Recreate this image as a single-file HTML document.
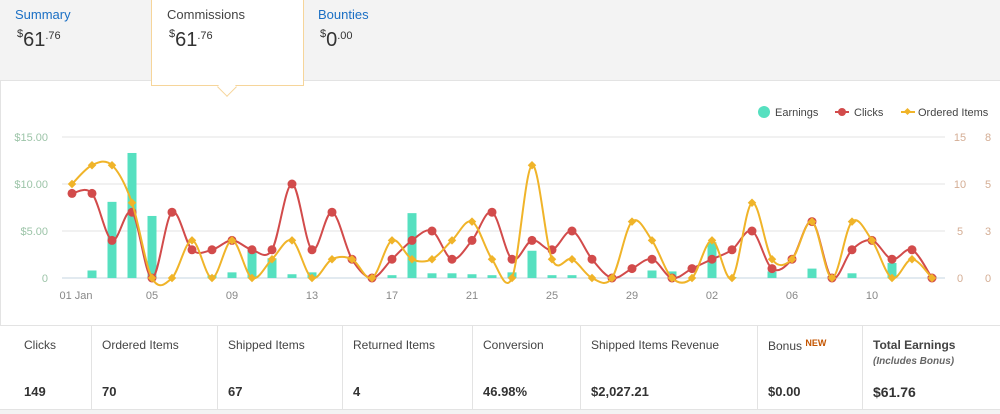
<!DOCTYPE html>
<html><head><meta charset="utf-8"><style>
*{margin:0;padding:0;box-sizing:border-box}
body{width:1000px;height:414px;background:#f3f3f3;font-family:"Liberation Sans",sans-serif;position:relative;overflow:hidden;color:#333}
.top{position:absolute;left:0;top:0;width:1000px;height:81px;background:#f3f3f3;border-bottom:1px solid #e3e3e3}
.main{position:absolute;left:0;top:81px;width:1000px;height:244px;background:#fff;border-left:1px solid #e3e3e3}
.tab{position:absolute;top:7px;font-size:13px}
.tab .l{color:#1a6fc4}
.amt{font-size:20px;color:#333;margin-top:6px;margin-left:2px}
.amt sup{font-size:11px;vertical-align:9px}
.amt .c{font-size:11px;vertical-align:7px}
.sel{position:absolute;left:151px;top:0;width:153px;height:86px;background:#fff;border:1px solid #f6d59a;border-top:none}
.arrow{position:absolute;left:220px;top:80px;width:14px;height:14px;background:#fff;border-right:1px solid #f6d59a;border-bottom:1px solid #f6d59a;transform:rotate(45deg)}
.stats{position:absolute;left:0;top:325px;width:1000px;height:85px;background:#fff;border-top:1px solid #e3e3e3;border-bottom:1px solid #e3e3e3}
.cell{position:absolute;top:0;height:84px;border-left:1px solid #e3e3e3;padding-left:10px}
.cell .h{position:absolute;top:12px;font-size:12px;color:#444;white-space:nowrap}
.cell .v{position:absolute;top:58px;font-size:13px;font-weight:bold;color:#333}
svg{position:absolute;left:0;top:0}
</style></head><body>
<div class="top"></div>
<div class="main"></div>
<div class="sel"></div><div class="arrow"></div>
<div class="tab" style="left:15px"><div class="l">Summary</div><div class="amt"><sup>$</sup>61<span class="c">.76</span></div></div>
<div class="tab" style="left:167px"><div class="l" style="color:#444">Commissions</div><div class="amt"><sup>$</sup>61<span class="c">.76</span></div></div>
<div class="tab" style="left:318px"><div class="l">Bounties</div><div class="amt"><sup>$</sup>0<span class="c">.00</span></div></div>
<svg id="ch" width="1000" height="414"></svg>
<div class="stats">
<div class="cell" style="left:0;border-left:none;padding-left:24px"><div class="h">Clicks</div><div class="v">149</div></div>
<div class="cell" style="left:91px"><div class="h">Ordered Items</div><div class="v">70</div></div>
<div class="cell" style="left:217px"><div class="h">Shipped Items</div><div class="v">67</div></div>
<div class="cell" style="left:342px"><div class="h">Returned Items</div><div class="v">4</div></div>
<div class="cell" style="left:472px"><div class="h">Conversion</div><div class="v">46.98%</div></div>
<div class="cell" style="left:580px"><div class="h">Shipped Items Revenue</div><div class="v">$2,027.21</div></div>
<div class="cell" style="left:757px"><div class="h">Bonus <span style="color:#c45500;font-size:9px;font-weight:bold;vertical-align:4px">NEW</span></div><div class="v">$0.00</div></div>
<div class="cell" style="left:862px"><div class="h" style="font-weight:bold">Total Earnings<br><i style="font-weight:bold;font-size:10px;color:#666;line-height:20px">(Includes Bonus)</i></div><div class="v" style="font-size:14px">$61.76</div></div>
</div>
<script>
var s='';
var G=[137,184,231,278],L=['$15.00','$10.00','$5.00','0'],R1=['15','10','5','0'],R2=['8','5','3','0'];
for(var k=0;k<4;k++){s+='<line x1="62" x2="945" y1="'+G[k]+'" y2="'+G[k]+'" stroke="'+(k==3?'#c5d6e0':'#e3e3e3')+'"/>';
s+='<text x="48" y="'+(G[k]+4)+'" text-anchor="end" font-size="11" fill="#9cc4a8">'+L[k]+'</text>';
s+='<text x="960" y="'+(G[k]+4)+'" text-anchor="middle" font-size="11" fill="#d4ad94">'+R1[k]+'</text>';
s+='<text x="988" y="'+(G[k]+4)+'" text-anchor="middle" font-size="11" fill="#d4ad94">'+R2[k]+'</text>';}
var xl={0:'01 Jan',4:'05',8:'09',12:'13',16:'17',20:'21',24:'25',28:'29',32:'02',36:'06',40:'10'};
for(var i in xl){s+='<text x="'+(72+20*i+(i==0?4:0))+'" y="299" text-anchor="middle" font-size="11" fill="#888">'+xl[i]+'</text>';}
var E={1:.8,2:8.1,3:13.3,4:6.6,7:.3,8:.6,9:3,10:2.1,11:.4,12:.6,16:.3,17:6.9,18:.5,19:.5,20:.4,21:.3,22:.6,23:2.9,24:.3,25:.3,29:.8,30:.7,32:3.8,33:.1,35:.7,37:1,38:.2,39:.5,41:1.6,43:.2};
for(var i in E){var h=E[i]*9.4;s+='<rect x="'+(72+20*i-4.5)+'" y="'+(278-h)+'" width="9" height="'+h+'" fill="#56e0c0"/>';}
var C=[9,9,4,7,0,7,3,3,4,3,3,10,3,7,2,0,2,4,5,2,4,7,2,4,3,5,2,0,1,2,0,1,2,3,5,1,2,6,0,3,4,2,3,0];
var O=[5,6,6,4,0,0,2,0,2,0,1,2,0,1,1,0,2,1,1,2,3,1,0,6,1,1,0,0,3,2,0,0,2,0,4,1,1,3,0,3,2,0,1,0];
function path(p){var d='M'+p[0][0]+','+p[0][1];for(var i=0;i<p.length-1;i++){var a=p[i-1]||p[i],b=p[i],c=p[i+1],e=p[i+2]||c;var t=0.5/3;
d+=' C'+(b[0]+(c[0]-a[0])*t)+','+(b[1]+(c[1]-a[1])*t)+' '+(c[0]-(e[0]-b[0])*t)+','+(c[1]-(e[1]-b[1])*t)+' '+c[0]+','+c[1];}return d;}
var pc=C.map(function(v,i){return[72+20*i,278-v*9.4]}),po=O.map(function(v,i){return[72+20*i,278-v*18.8]});
s+='<path d="'+path(pc)+'" fill="none" stroke="#d24b4b" stroke-width="2"/>';
pc.forEach(function(p){s+='<circle cx="'+p[0]+'" cy="'+p[1]+'" r="4.5" fill="#d24b4b"/>'});
s+='<path d="'+path(po)+'" fill="none" stroke="#f0b429" stroke-width="2"/>';
po.forEach(function(p){s+='<rect x="'+(p[0]-3)+'" y="'+(p[1]-3)+'" width="6" height="6" fill="#f0b429" transform="rotate(45 '+p[0]+' '+p[1]+')"/>'});
s+='<circle cx="764" cy="112" r="6" fill="#56e0c0"/><text x="775" y="116" font-size="11" fill="#444">Earnings</text>';
s+='<line x1="835" x2="849" y1="112" y2="112" stroke="#d24b4b" stroke-width="2"/><circle cx="842" cy="112" r="4" fill="#d24b4b"/><text x="854" y="116" font-size="11" fill="#444">Clicks</text>';
s+='<line x1="901" x2="915" y1="112" y2="112" stroke="#f0b429" stroke-width="2"/><rect x="905" y="109" width="5" height="5" fill="#f0b429" transform="rotate(45 907.5 111.5)"/><text x="918" y="116" font-size="11" fill="#444">Ordered Items</text>';
document.getElementById('ch').innerHTML=s;
</script>
</body></html>
